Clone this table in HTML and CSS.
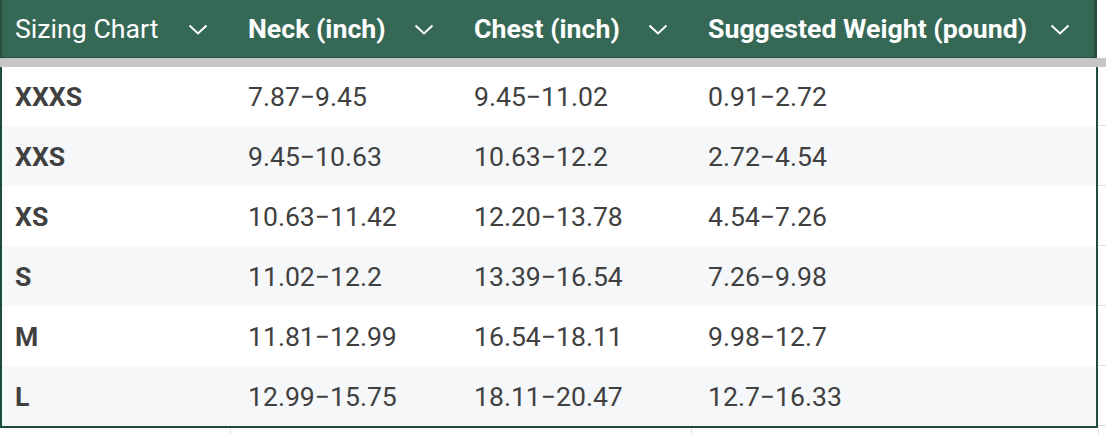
FILE: index.html
```html
<!DOCTYPE html>
<html>
<head>
<meta charset="utf-8">
<link rel="stylesheet" href="styles.css">
</head>
<body>
<div class="sheet">
  <div class="head-row">
    <div class="header">
      <div class="hcell first"><span>Sizing Chart</span><svg class="chev" viewBox="0 0 20 11"><path d="M1.5 1.5 L10 9.5 L18.5 1.5"/></svg></div>
      <div class="hcell"><span>Neck (inch)</span><svg class="chev" viewBox="0 0 20 11"><path d="M1.5 1.5 L10 9.5 L18.5 1.5"/></svg></div>
      <div class="hcell"><span>Chest (inch)</span><svg class="chev" viewBox="0 0 20 11"><path d="M1.5 1.5 L10 9.5 L18.5 1.5"/></svg></div>
      <div class="hcell"><span>Suggested Weight (pound)</span><svg class="chev" viewBox="0 0 20 11"><path d="M1.5 1.5 L10 9.5 L18.5 1.5"/></svg></div>
    </div>
  </div>
  <div class="freeze"></div>
  <div class="main">
    <div class="table">
      <div class="row"><div class="cell first">XXXS</div><div class="cell">7.87−9.45</div><div class="cell">9.45−11.02</div><div class="cell">0.91−2.72</div></div>
      <div class="row alt"><div class="cell first">XXS</div><div class="cell">9.45−10.63</div><div class="cell">10.63−12.2</div><div class="cell">2.72−4.54</div></div>
      <div class="row"><div class="cell first">XS</div><div class="cell">10.63−11.42</div><div class="cell">12.20−13.78</div><div class="cell">4.54−7.26</div></div>
      <div class="row alt"><div class="cell first">S</div><div class="cell">11.02−12.2</div><div class="cell">13.39−16.54</div><div class="cell">7.26−9.98</div></div>
      <div class="row"><div class="cell first">M</div><div class="cell">11.81−12.99</div><div class="cell">16.54−18.11</div><div class="cell">9.98−12.7</div></div>
      <div class="row alt"><div class="cell first">L</div><div class="cell">12.99−15.75</div><div class="cell">18.11−20.47</div><div class="cell">12.7−16.33</div></div>
    </div>
    <div class="gutter">
      <div class="gcell"></div><div class="gcell"></div><div class="gcell"></div><div class="gcell"></div><div class="gcell"></div><div class="gcell"></div>
    </div>
  </div>
  <div class="below">
    <div class="bcell c1"></div><div class="bcell c2"></div><div class="bcell c3"></div><div class="bcell c4"></div>
  </div>
</div>
</body>
</html>
```
FILE: styles.css
```css
html, body {
  margin: 0;
  padding: 0;
  background: #ffffff;
}
body {
  font-family: Roboto, "Liberation Sans", sans-serif;
  font-size: 26.6px;
  width: 1106px;
  height: 434px;
  overflow: hidden;
}
.sheet {
  display: flex;
  flex-direction: column;
}
.head-row {
  display: flex;
}
.header {
  height: 57px;
  width: 1092px;
  display: grid;
  grid-template-columns: 230px 226px 234px 1fr;
  background: #366955;
  border-left: 2px solid #27503f;
  border-right: 3px solid #27503f;
  border-bottom: 1px solid #27503f;
}
.hcell {
  display: flex;
  align-items: center;
  justify-content: space-between;
  padding: 0 24px 0 16px;
  color: #ffffff;
  font-size: 26.7px;
  font-weight: 700;
  white-space: nowrap;
}
.hcell.first {
  font-weight: 400;
  padding-left: 13px;
}
.chev {
  width: 20px;
  height: 11px;
  fill: none;
  stroke: #ffffff;
  stroke-width: 2;
  margin-top: 2px;
}
.freeze {
  height: 9px;
  background: #c6c6c6;
}
.main {
  display: flex;
}
.table {
  width: 1094px;
  border-left: 2px solid #1f4d3b;
  border-right: 2px solid #1f4d3b;
  border-bottom: 2px solid #1f4d3b;
  display: flex;
  flex-direction: column;
}
.row {
  display: grid;
  grid-template-columns: 230px 226px 234px 1fr;
  height: 60px;
  background: #ffffff;
  color: #404040;
}
.row:first-child {
  height: 59px;
}
.row.alt {
  background: #f6f7f9;
}
.cell {
  display: flex;
  align-items: center;
  padding-left: 16px;
  white-space: nowrap;
}
.cell.first {
  padding-left: 13px;
  font-weight: 700;
}
.gutter {
  flex: 1;
  display: flex;
  flex-direction: column;
}
.gcell {
  height: 59px;
  border-bottom: 1px solid #e0e0e0;
}
.gcell:first-child {
  height: 58px;
}
.below {
  display: flex;
  height: 6px;
}
.bcell {
  border-right: 1px solid #e0e0e0;
}
.c1 { width: 230px; }
.c2 { width: 460px; }
.c3 { width: 406px; }
.c4 { flex: 1; border-right: none; }
```
